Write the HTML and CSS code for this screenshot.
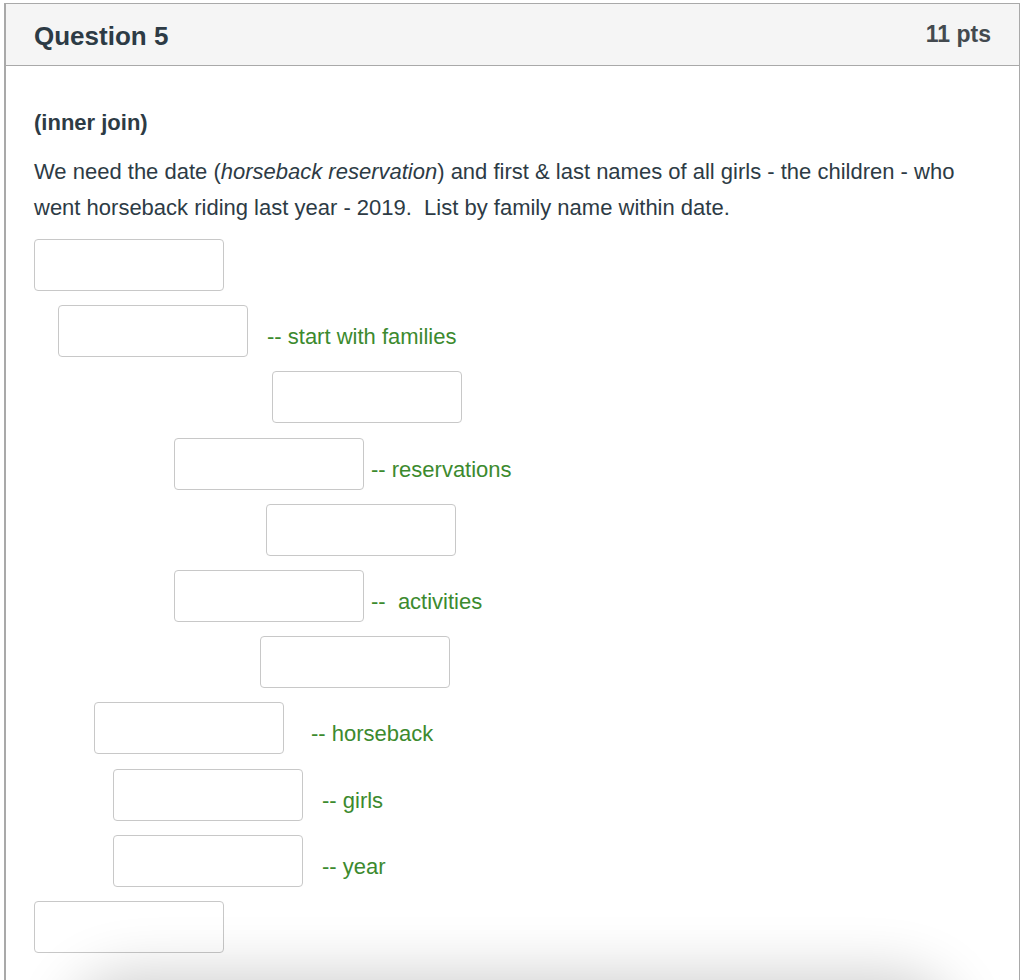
FILE: index.html
```html
<!DOCTYPE html>
<html lang="en">
<head>
<meta charset="utf-8">
<title>Question 5</title>
<link rel="stylesheet" href="styles.css">
</head>
<body>
<div class="page">
  <section class="question">
    <header class="q-header">
      <h2 class="q-title">Question 5</h2>
      <span class="q-points">11 pts</span>
    </header>
    <div class="q-body">
      <p class="q-sub">(inner join)</p>
      <p class="q-text">We need the date (<em>horseback reservation</em>) and first &amp; last names of all girls - the children - who went horseback riding last year - 2019.&nbsp; List by family name within date.</p>
      <div class="answers">
        <div class="row ind-0"><input class="blank" type="text" aria-label="blank 1"></div>
        <div class="row ind-24"><input class="blank" type="text" aria-label="blank 2"><span class="comment gap-19">-- start with families</span></div>
        <div class="row ind-238"><input class="blank" type="text" aria-label="blank 3"></div>
        <div class="row ind-140"><input class="blank" type="text" aria-label="blank 4"><span class="comment gap-7">-- reservations</span></div>
        <div class="row ind-232"><input class="blank" type="text" aria-label="blank 5"></div>
        <div class="row ind-140"><input class="blank" type="text" aria-label="blank 6"><span class="comment gap-7">--&nbsp;&nbsp;activities</span></div>
        <div class="row ind-226"><input class="blank" type="text" aria-label="blank 7"></div>
        <div class="row ind-60"><input class="blank" type="text" aria-label="blank 8"><span class="comment gap-27">-- horseback</span></div>
        <div class="row ind-79"><input class="blank" type="text" aria-label="blank 9"><span class="comment gap-19">-- girls</span></div>
        <div class="row ind-79"><input class="blank" type="text" aria-label="blank 10"><span class="comment gap-19">-- year</span></div>
        <div class="row ind-0"><input class="blank" type="text" aria-label="blank 11"></div>
      </div>
    </div>
  </section>
  <div class="bottom-shadow"></div>
</div>
</body>
</html>
```

FILE: styles.css
```css
html, body {
  margin: 0;
  padding: 0;
  height: 980px;
  overflow: hidden;
  background: #ffffff;
}

body {
  font-family: "Liberation Sans", Arial, Helvetica, sans-serif;
  color: #2d3b45;
}

.page {
  position: relative;
  height: 980px;
  padding: 3px 0 0 4px;
  box-sizing: border-box;
}

.question {
  width: 1016px;
  min-height: 1100px;
  border: 1px solid #a9a9a9;
  border-left-width: 2px;
  box-sizing: border-box;
  background: #ffffff;
}

.q-header {
  display: flex;
  align-items: center;
  justify-content: space-between;
  height: 62px;
  box-sizing: border-box;
  padding: 0 28px 0 28px;
  background: #f5f5f5;
  border-bottom: 1px solid #a9a9a9;
}

.q-title {
  margin: 0;
  font-size: 26px;
  font-weight: bold;
  color: #2d3b45;
  position: relative;
  top: 2px;
}

.q-points {
  font-size: 23px;
  font-weight: bold;
  color: #444a4f;
}

.q-body {
  padding: 39px 28px 0 28px;
}

.q-sub {
  margin: 0 0 13px 0;
  font-size: 22px;
  line-height: 36px;
  font-weight: bold;
}

.q-text {
  margin: 0 0 13px 0;
  font-size: 22px;
  line-height: 36px;
  max-width: 945px;
}

.answers {
  display: flex;
  flex-direction: column;
  gap: 14.2px;
}

.row {
  display: flex;
  align-items: center;
}

.blank {
  width: 190px;
  height: 52px;
  box-sizing: border-box;
  margin: 0;
  border: 1px solid #c8c8c8;
  border-radius: 4px;
  background: #ffffff;
  font-family: inherit;
  font-size: 16px;
  padding: 0 8px;
}

.comment {
  font-size: 22px;
  color: #3c8a2e;
  white-space: pre;
  margin-top: 12px;
}

.ind-0 { padding-left: 0; }
.ind-24 { padding-left: 24px; }
.ind-60 { padding-left: 60px; }
.ind-79 { padding-left: 79px; }
.ind-140 { padding-left: 140px; }
.ind-226 { padding-left: 226px; }
.ind-232 { padding-left: 232px; }
.ind-238 { padding-left: 238px; }

.gap-7 { margin-left: 7px; }
.gap-19 { margin-left: 19px; }
.gap-27 { margin-left: 27px; }

.bottom-shadow {
  position: absolute;
  left: 90px;
  right: 90px;
  top: 995px;
  height: 80px;
  border-radius: 40px;
  background: #ffffff;
  box-shadow: 0 0 60px 20px rgba(0, 0, 0, 0.2);
}
```
